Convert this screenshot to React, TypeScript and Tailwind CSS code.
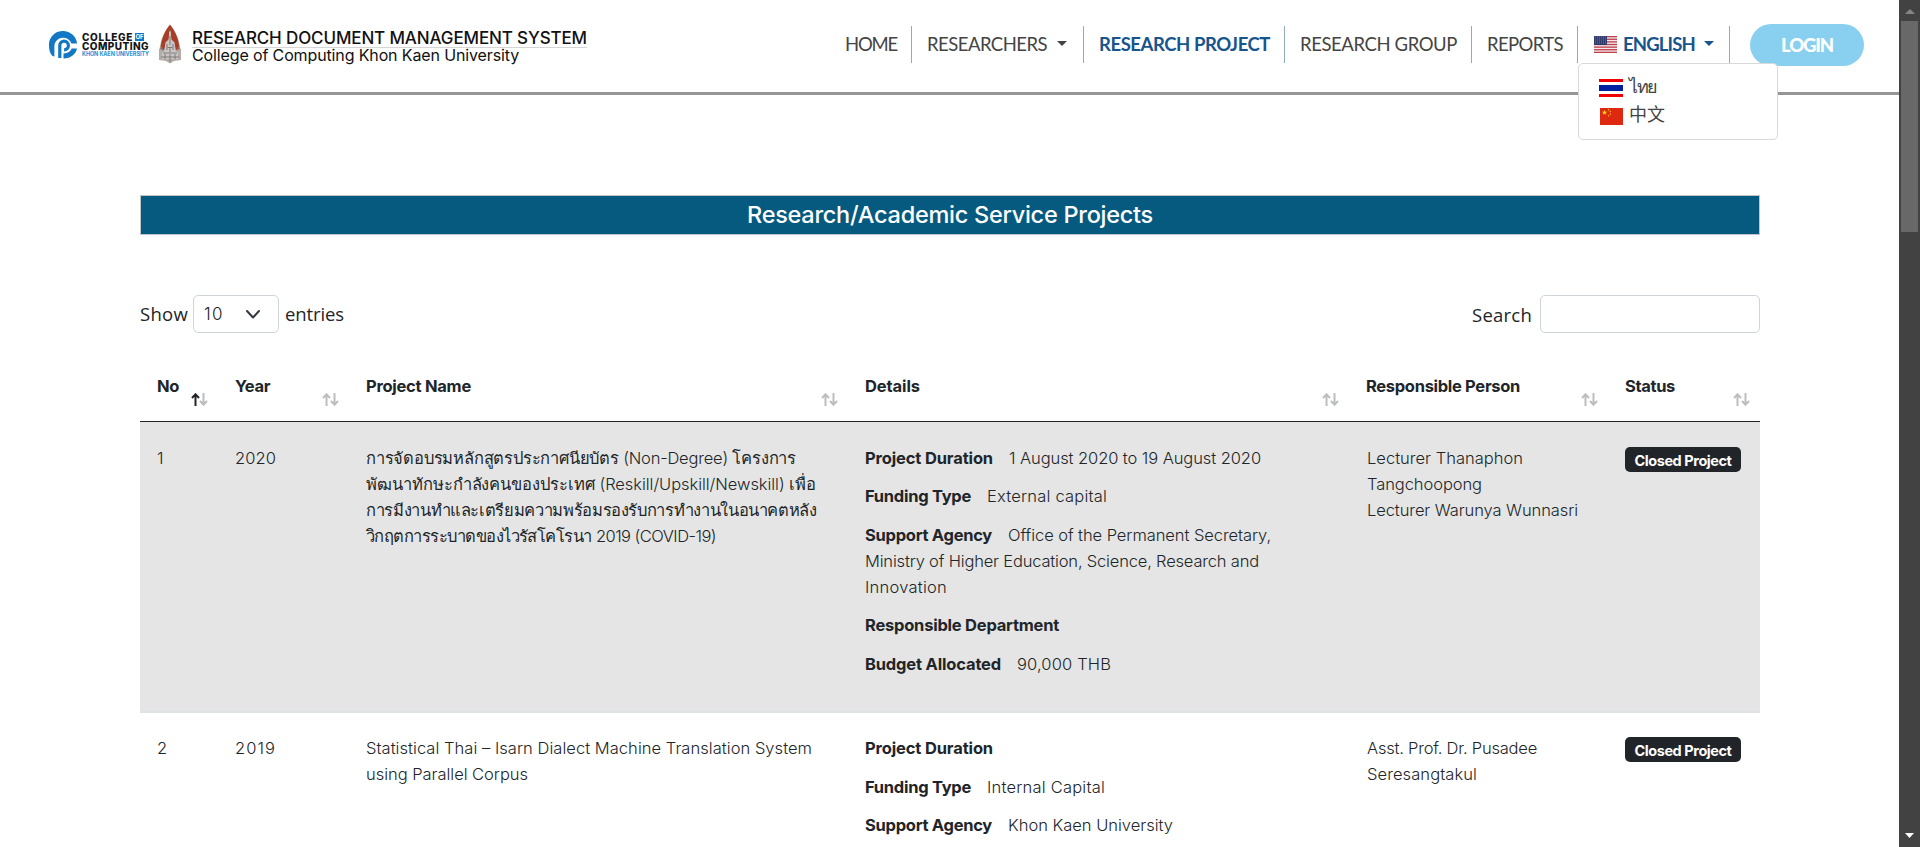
import { useLayoutEffect, useRef } from "react";
import type { ReactNode } from "react";

/** One line of text whose tracking is adjusted so that it fills `w` pixels. */
function Fit({ w, className = "", children }: { w: number; className?: string; children: string }) {
  const ref = useRef<HTMLSpanElement>(null);
  useLayoutEffect(() => {
    const el = ref.current;
    if (!el) return;
    el.style.letterSpacing = "0px";
    const natural = el.getBoundingClientRect().width;
    const marks = (children.match(/[\u0E31\u0E34-\u0E3A\u0E47-\u0E4E]/g) ?? []).length;
    el.style.letterSpacing = `${(w - natural) / Math.max(1, children.length - marks)}px`;
  }, [w, children]);
  return (
    <span ref={ref} className={`inline-block whitespace-pre ${className}`}>
      {children}
    </span>
  );
}

function CollegeMark() {
  return (
    <svg className="h-[28px] w-[30px] shrink-0" viewBox="0 0 30 28" fill="none">
      <path d="M4.500 25C2 22.500 1 19 1 14.500A14 13.500 0 0 1 29 12.500h-5.500A8.800 8.600 0 0 0 6.400 14.500V25.500z" fill="#1277c4" />
      <path d="M11.800 27V14.500a4.300 4.300 0 1 1 4.300 4.300" stroke="#1277c4" strokeWidth="3.200" />
      <path d="M29 17.500c-1.200 5.500-6 10-13.500 10v-5c4.500-.3 7-2 8.200-5z" fill="#1277c4" />
    </svg>
  );
}

function UniversityEmblem() {
  return (
    <svg className="h-[40px] w-[24px] shrink-0" viewBox="0 0 24 40">
      <path d="M12 .5C9 4 3.500 12 2.300 21L1 27v9l7 1 4 2.500 4-2.500 7-1v-9l-1.300-6C20.500 12 15 4 12 .5z" fill="#b4aca9" />
      <path d="M12 .8C8.500 5 3.200 13 2.600 25l3.400 1 2-8 3-3V8l1-2 1 2v7l3 3 2 8 3.400-1C20.800 13 15.500 5 12 .8z" fill="#a83e25" />
      <path d="M11.300 8h1.400l.8 8 3 2.500.8 8 2.700 2.500v6h-16v-6l2.700-2.500.8-8 3-2.500z" fill="#c9c6c5" />
      <path d="M12 12v9M9 20v6M15 20v6M12 23v5M5 29h14M3 33h18M7 30v5M12 30v8M17 30v5M9.500 23.500h5" stroke="#716b69" strokeWidth=".8" />
      <path d="M1.500 26l2-3 1.500 4M22.500 26l-2-3-1.500 4" stroke="#8b8583" strokeWidth=".8" fill="none" />
    </svg>
  );
}

function Brand() {
  return (
    <div className="flex h-[92px] items-start pl-[48px] pt-[24px]">
      <div className="mt-[7px]">
        <CollegeMark />
      </div>
      <div className="ml-[4px] mt-[9px] flex w-[68px] flex-col font-['Inter'] font-extrabold text-[#151515]">
        <div className="flex h-[8px] items-center gap-[2px] text-[10px] leading-[8px]">
          <Fit w={51}>COLLEGE</Fit>
          <span className="flex h-[8px] w-[9px] items-center justify-center bg-[#1277c4] text-[6px] font-bold leading-[8px] text-white">
            OF
          </span>
        </div>
        <div className="mt-[1px] h-[8px] text-[10px] leading-[8px]">
          <Fit w={67}>COMPUTING</Fit>
        </div>
        <div className="mt-[2px] h-[5px] text-[5.500px] font-bold leading-[5px] text-[#2a8fd6]">
          <Fit w={67}>KHON KAEN UNIVERSITY</Fit>
        </div>
      </div>
      <div className="ml-[8px]">
        <UniversityEmblem />
      </div>
      <div className="ml-[10px] mt-[5px] w-[395px] font-['Inter'] text-[#111]">
        <div className="h-[19px] border-b border-[#d5d5d5] text-[17px] font-medium leading-[18px]">
          <Fit w={395}>RESEARCH DOCUMENT MANAGEMENT SYSTEM</Fit>
        </div>
        <div className="text-[16px] leading-[14px]">
          <Fit w={327}>College of Computing Khon Kaen University</Fit>
        </div>
      </div>
    </div>
  );
}

function Caret({ className }: { className: string }) {
  return (
    <svg className={`h-[5px] w-[10px] ${className}`} viewBox="0 0 10 5">
      <path d="M0 0h10L5 5z" fill="currentColor" />
    </svg>
  );
}

function NavItem({ width, children, last = false }: { width: string; children: ReactNode; last?: boolean }) {
  return (
    <li className={`flex h-[37px] items-center border-r border-[#93a9bd] pb-[2px] ${width} ${last ? "pl-[16px]" : "pl-[15px]"}`}>
      {children}
    </li>
  );
}

function UsFlag() {
  return (
    <svg className="mt-[2px] h-[17px] w-[23px]" viewBox="0 0 23 17">
      <rect width="23" height="17" fill="#f3e9ea" />
      {[0, 1, 2, 3, 4, 5, 6].map((i) => (
        <rect key={i} y={i * 2.62} width="23" height="1.300" fill="#bf3f4d" />
      ))}
      <rect width="13" height="9" fill="#303a6b" />
      {[1, 3, 5, 7].map((y) => (
        <path key={y} d={`M1 ${y}h11`} stroke="#8087a8" strokeWidth=".8" strokeDasharray="1 1" />
      ))}
    </svg>
  );
}

function ThaiFlag() {
  return (
    <svg className="h-[18px] w-[24px]" viewBox="0 0 24 18">
      <rect width="24" height="18" fill="#fff" />
      <rect width="24" height="3" fill="#f00000" />
      <rect y="6" width="24" height="6" fill="#00209f" />
      <rect y="15" width="24" height="3" fill="#f00000" />
    </svg>
  );
}

function ChinaFlag() {
  return (
    <svg className="h-[17px] w-[23px]" viewBox="0 0 23 17">
      <rect width="23" height="17" fill="#de2910" />
      <path d="M4.500 2l.7 1.700 1.800.1-1.400 1.200.5 1.800-1.600-1-1.600 1 .5-1.800L2 3.800l1.800-.1z" fill="#ffde00" />
      <g fill="#ffc400">
        <circle cx="8.500" cy="1.700" r=".7" />
        <circle cx="10.300" cy="3.500" r=".7" />
        <circle cx="10.300" cy="6" r=".7" />
        <circle cx="8.500" cy="7.800" r=".7" />
      </g>
    </svg>
  );
}

function LanguageMenu() {
  return (
    <div className="absolute left-0 top-[37px] z-10 flex h-[77px] w-[200px] flex-col rounded-[5px] border border-[#d9d9d9] bg-white pl-[20px] pt-[10px] font-['Noto_Sans'] text-[18px] text-[#444]">
      <div className="flex h-[28px] items-center gap-[6px]">
        <ThaiFlag />
        <Fit w={28} className="-mt-[5px] leading-[24px]">ไทย</Fit>
      </div>
      <div className="flex h-[28px] items-center gap-[6px] pl-[1px] font-['Noto_Sans_CJK_SC']">
        <ChinaFlag />
        <Fit w={36} className="-mt-[6px] leading-[24px]">中文</Fit>
      </div>
    </div>
  );
}

function Header() {
  return (
    <header className="flex h-[95px] justify-between border-b-[3px] border-[#959595] bg-white">
      <Brand />
      <nav className="flex items-start pr-[35px] font-['Lato'] text-[18.500px] leading-[28px] text-[#444]">
        <ul className="mt-[26px] flex">
          <NavItem width="w-[82px]"><Fit w={52}>HOME</Fit></NavItem>
          <NavItem width="w-[172px]">
            <Fit w={120}>RESEARCHERS</Fit>
            <Caret className="mb-[1px] ml-[10px]" />
          </NavItem>
          <NavItem width="w-[201px]">
            <Fit w={171} className="font-bold text-[#17558c]">RESEARCH PROJECT</Fit>
          </NavItem>
          <NavItem width="w-[187px]"><Fit w={157}>RESEARCH GROUP</Fit></NavItem>
          <NavItem width="w-[106px]"><Fit w={76}>REPORTS</Fit></NavItem>
          <li className="relative">
            <ul>
              <NavItem width="w-[152px]" last>
                <UsFlag />
                <Fit w={72} className="ml-[6px] font-bold text-[#17558c]">ENGLISH</Fit>
                <Caret className="mb-[1px] ml-[9px] text-[#17558c]" />
              </NavItem>
            </ul>
            <LanguageMenu />
          </li>
        </ul>
        <button className="ml-[20px] mt-[24px] flex h-[42px] w-[114px] items-center justify-center rounded-full bg-[#89cff0] text-[18.500px] font-black text-white">
          <Fit w={52}>LOGIN</Fit>
        </button>
      </nav>
    </header>
  );
}

function Controls() {
  return (
    <div className="mt-[60px] flex h-[38px] items-center justify-between font-['Open_Sans'] text-[18.500px] text-[#212529]">
      <div className="flex items-center">
        <Fit w={48}>Show</Fit>
        <div className="ml-[5px] flex h-[38px] w-[86px] items-center rounded-[5px] border border-[#ced4da] pl-[10px] font-['Inter'] text-[17px] font-light">
          <Fit w={20} className="mt-[2px]">10</Fit>
          <svg className="ml-[22px] h-[9px] w-[14px]" viewBox="0 0 14 9" fill="none">
            <path d="M1 1l6 6.500L13 1" stroke="#343a40" strokeWidth="2" strokeLinecap="round" strokeLinejoin="round" />
          </svg>
        </div>
        <Fit w={59} className="ml-[6px]">entries</Fit>
      </div>
      <div className="flex items-center">
        <Fit w={60} className="mr-[8px] mt-[1px]">Search</Fit>
        <div className="h-[38px] w-[220px] rounded-[5px] border border-[#ced4da]" />
      </div>
    </div>
  );
}

function SortArrows({ active = false }: { active?: boolean }) {
  return (
    <svg className="mr-[10px] mt-[31px] h-[13px] w-[17px] shrink-0" viewBox="0 0 17 13" fill="none" strokeWidth="2">
      <path d="M4.500 13V1.500M1 5l3.500-3.700L8 5" stroke={active ? "#212529" : "#bcbdbe"} />
      <path d="M12.500 0v11.500M9 8l3.500 3.700L16 8" stroke="#bcbdbe" />
    </svg>
  );
}

function HeadCell({ label, w, width, active }: { label: string; w: number; width: string; active?: boolean }) {
  return (
    <div className={`flex items-start justify-between pl-[17px] ${width}`}>
      <Fit w={w} className="mt-[11px] leading-[26px]">{label}</Fit>
      <SortArrows active={active} />
    </div>
  );
}

type Line = { text: string; w: number };
type Detail = { label: Line; lines: Line[] };
type Project = { no: string; year: string; name: Line[]; details: Detail[]; people: Line[]; tone: string };

const projects: Project[] = [
  {
    no: "1",
    year: "2020",
    tone: "bg-[#e5e5e5] border-b-2 border-[#dee2e6] pt-[23px]",
    name: [
      { text: "การจัดอบรมหลักสูตรประกาศนียบัตร (Non-Degree) โครงการ", w: 430 },
      { text: "พัฒนาทักษะกำลังคนของประเทศ (Reskill/Upskill/Newskill) เพื่อ", w: 450 },
      { text: "การมีงานทำและเตรียมความพร้อมรองรับการทำงานในอนาคตหลัง", w: 450 },
      { text: "วิกฤตการระบาดของไวรัสโคโรนา 2019 (COVID-19)", w: 350 },
    ],
    details: [
      { label: { text: "Project Duration", w: 128 }, lines: [{ text: "1 August 2020 to 19 August 2020", w: 252 }] },
      { label: { text: "Funding Type", w: 106 }, lines: [{ text: "External capital", w: 120 }] },
      {
        label: { text: "Support Agency", w: 127 },
        lines: [
          { text: "Office of the Permanent Secretary,", w: 263 },
          { text: "Ministry of Higher Education, Science, Research and", w: 394 },
          { text: "Innovation", w: 82 },
        ],
      },
      { label: { text: "Responsible Department", w: 194 }, lines: [] },
      { label: { text: "Budget Allocated", w: 136 }, lines: [{ text: "90,000 THB", w: 94 }] },
    ],
    people: [
      { text: "Lecturer Thanaphon", w: 156 },
      { text: "Tangchoopong", w: 115 },
      { text: "Lecturer Warunya Wunnasri", w: 211 },
    ],
  },
  {
    no: "2",
    year: "2019",
    tone: "bg-white pt-[22.400px]",
    name: [
      { text: "Statistical Thai – Isarn Dialect Machine Translation System", w: 446 },
      { text: "using Parallel Corpus", w: 162 },
    ],
    details: [
      { label: { text: "Project Duration", w: 128 }, lines: [] },
      { label: { text: "Funding Type", w: 106 }, lines: [{ text: "Internal Capital", w: 118 }] },
      { label: { text: "Support Agency", w: 127 }, lines: [{ text: "Khon Kaen University", w: 165 }] },
    ],
    people: [
      { text: "Asst. Prof. Dr. Pusadee", w: 170 },
      { text: "Seresangtakul", w: 110 },
    ],
  },
];

function Lines({ lines }: { lines: Line[] }) {
  return (
    <>
      {lines.map((l) => (
        <div key={l.text} className="h-[26px]"><Fit w={l.w}>{l.text}</Fit></div>
      ))}
    </>
  );
}

function ProjectRow({ p }: { p: Project }) {
  return (
    <div className={`flex h-[291px] shrink-0 font-['Inter'] text-[16.500px] font-light leading-[26px] text-[#212529] ${p.tone}`}>
      <div className="w-[78px] pl-[17px]">{p.no}</div>
      <div className="w-[131px] pl-[17px]"><Fit w={41}>{p.year}</Fit></div>
      <div className="w-[499px] pl-[17px]"><Lines lines={p.name} /></div>
      <div className="flex w-[501px] flex-col gap-[12.400px] pl-[17px]">
        {p.details.map((d) => (
          <div key={d.label.text}>
            <div className="flex h-[26px] gap-[16px]">
              <Fit w={d.label.w} className="font-bold">{d.label.text}</Fit>
              {d.lines[0] && <Fit w={d.lines[0].w}>{d.lines[0].text}</Fit>}
            </div>
            <Lines lines={d.lines.slice(1)} />
          </div>
        ))}
      </div>
      <div className="w-[259px] pl-[18px]"><Lines lines={p.people} /></div>
      <div className="pl-[17px] pt-[2px]">
        <div className="flex h-[25px] w-[116px] items-center justify-center rounded-[5px] bg-[#212529] text-[14.500px] font-bold text-white">
          <Fit w={97} className="mt-[2px]">Closed Project</Fit>
        </div>
      </div>
    </div>
  );
}

function Scrollbar() {
  return (
    <div className="flex w-[21px] shrink-0 flex-col items-center bg-[#424242]">
      <svg className="mt-[9px] h-[5px] w-[10px]" viewBox="0 0 10 5"><path d="M5 0l5 5H0z" fill="#858585" /></svg>
      <div className="mt-[7px] h-[211px] w-[17px] bg-[#686868]" />
      <svg className="mb-[9px] mt-auto h-[5px] w-[9px]" viewBox="0 0 9 5"><path d="M0 0h9L4.500 5z" fill="#fff" /></svg>
    </div>
  );
}

export default function App() {
  return (
    <div className="flex h-[847px] w-[1920px] overflow-hidden bg-white">
      <div className="flex w-[1899px] flex-col">
        <Header />
        <main className="flex flex-col pl-[140px] pr-[139px] pt-[100px]">
          <h1 className="flex h-[40px] items-center justify-center border border-[#c0c5c8] bg-[#065a7f] font-['Inter'] text-[23.500px] font-medium leading-[36px] text-white">
            <Fit w={406}>Research/Academic Service Projects</Fit>
          </h1>
          <Controls />
          <div className="mt-[29px] flex h-[60px] shrink-0 border-b border-[#212529] font-['Inter'] text-[16.500px] font-bold text-[#212529]">
            <HeadCell label="No" w={22} width="w-[78px]" active />
            <HeadCell label="Year" w={35} width="w-[131px]" />
            <HeadCell label="Project Name" w={105} width="w-[499px]" />
            <HeadCell label="Details" w={55} width="w-[501px]" />
            <HeadCell label="Responsible Person" w={154} width="w-[259px]" />
            <HeadCell label="Status" w={50} width="w-[152px]" />
          </div>
          {projects.map((p) => (
            <ProjectRow key={p.no} p={p} />
          ))}
        </main>
      </div>
      <Scrollbar />
    </div>
  );
}
